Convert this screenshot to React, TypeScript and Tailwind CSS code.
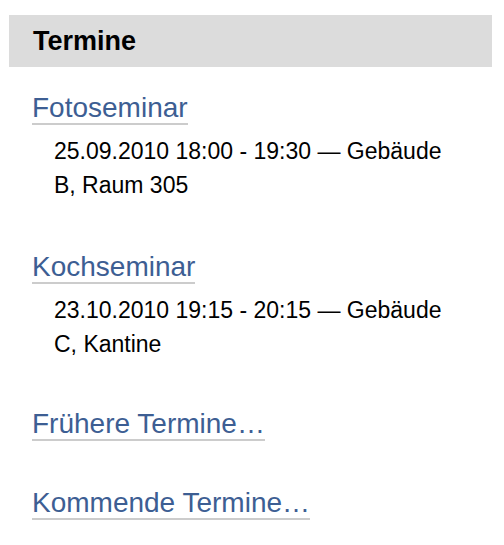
const termine = [
  { title: 'Fotoseminar', info: '25.09.2010 18:00 - 19:30 — Gebäude B, Raum 305' },
  { title: 'Kochseminar', info: '23.10.2010 19:15 - 20:15 — Gebäude C, Kantine' },
];

function TerminLink({ children }: { children: React.ReactNode }) {
  return (
    <a href="#" className="border-b-2 border-[#cccccc] text-[#3d5e93] no-underline">
      {children}
    </a>
  );
}

export default function App() {
  return (
    <div className="min-h-[545px] w-[504px] bg-white pt-[15px] font-['Liberation_Sans',Arial,sans-serif] text-black">
      <div className="ml-[9px] w-[483px]">
        <h2 className="h-[52px] bg-[#dcdcdc] pl-[24px] text-[27px] font-bold leading-[52px]">Termine</h2>

        <ul className="mt-[24px] pl-[23px]">
          {termine.map((t, i) => (
            <li key={t.title} className={i > 0 ? 'mt-[48px]' : ''}>
              <div className="text-[28px] leading-[34px]">
                <TerminLink>{t.title}</TerminLink>
              </div>
              <p className="mt-[9px] w-[424px] pl-[22px] text-[23px] leading-[34px]">{t.info}</p>
            </li>
          ))}
        </ul>

        <div className="mt-[46px] pl-[23px] text-[28px] leading-[34px]">
          <TerminLink>Frühere Termine…</TerminLink>
        </div>
        <div className="mt-[45px] pl-[23px] text-[28px] leading-[34px]">
          <TerminLink>Kommende Termine…</TerminLink>
        </div>
      </div>
    </div>
  );
}
